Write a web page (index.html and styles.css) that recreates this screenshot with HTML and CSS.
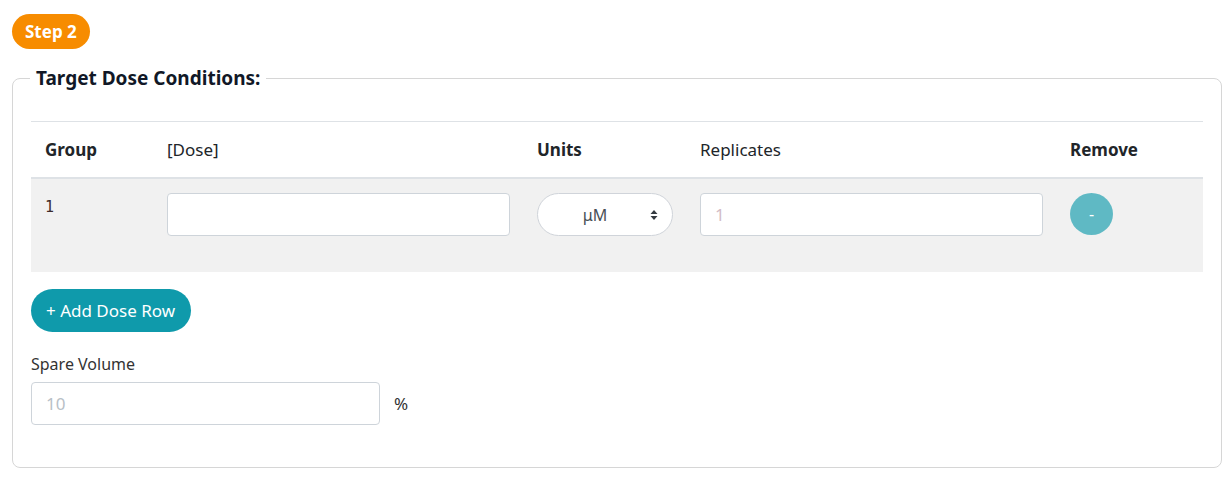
FILE: index.html
```html
<!DOCTYPE html>
<html lang="en">
<head>
  <meta charset="utf-8">
  <title>Dose conditions</title>
  <link rel="stylesheet" href="styles.css">
</head>
<body>
  <span class="step-badge">Step 2</span>

  <fieldset class="dose-box">
    <legend>Target Dose Conditions:</legend>

    <table class="dose-table">
      <colgroup>
        <col class="c-group">
        <col class="c-dose">
        <col class="c-units">
        <col class="c-reps">
        <col class="c-remove">
      </colgroup>
      <thead>
        <tr>
          <th>Group</th>
          <th class="plain">[Dose]</th>
          <th>Units</th>
          <th class="plain">Replicates</th>
          <th>Remove</th>
        </tr>
      </thead>
      <tbody>
        <tr>
          <td class="group-num">1</td>
          <td><input type="text" class="form-input"></td>
          <td>
            <div class="unit-select">
              <select>
                <option>μM</option>
                <option>nM</option>
                <option>mM</option>
              </select>
              <svg class="caret" width="8" height="12" viewBox="0 0 8 12">
                <path d="M4 1 L7.5 5 L0.5 5 Z M4 11 L7.5 7 L0.5 7 Z" fill="#343a40"/>
              </svg>
            </div>
          </td>
          <td><input type="text" class="form-input reps" placeholder="1"></td>
          <td><button class="remove-btn" disabled>-</button></td>
        </tr>
      </tbody>
    </table>

    <button class="add-btn">+ Add Dose Row</button>

    <label class="spare-label" for="spare">Spare Volume</label>
    <div class="spare-row">
      <input type="text" id="spare" class="form-input spare-input" placeholder="10">
      <span class="unit">%</span>
    </div>
  </fieldset>
</body>
</html>
```

FILE: styles.css
```css
body {
  font-family: "Noto Sans", "Liberation Sans", sans-serif;
  font-size: 17px;
  color: #212529;
  margin: 0;
  padding: 14px 9px 0 12px;
  background: #fff;
}

.step-badge {
  display: inline-block;
  background-color: #f78c00;
  color: #fff;
  font-weight: bold;
  font-size: 17px;
  line-height: 35px;
  padding: 0 13px;
  border-radius: 18px;
}

.dose-box {
  margin: 16px 0 0 0;
  border: 1px solid #d6d6d6;
  border-radius: 8px;
  padding: 16px 18px 42px 18px;
}

.dose-box legend {
  font-weight: bold;
  font-size: 19px;
  padding: 0 6px;
  margin-left: -1px;
  color: #111827;
}

.dose-table {
  width: 100%;
  border-collapse: collapse;
  table-layout: fixed;
  margin-top: 14px;
}

.c-group { width: 122px; }
.c-dose { width: 370px; }
.c-units { width: 163px; }
.c-reps { width: 370px; }

.dose-table th {
  text-align: left;
  padding: 16px 14px 15px;
  line-height: 24px;
  border-top: 1px solid #dee2e6;
  border-bottom: 2px solid #dee2e6;
  font-weight: bold;
}

.dose-table th.plain {
  font-weight: normal;
}

.dose-table td {
  background-color: #f1f1f1;
  padding: 14px 13px 36px 14px;
  vertical-align: top;
}

.group-num {
  font-family: "DejaVu Sans Mono", monospace;
  font-size: 15px;
  color: #3d2b2b;
  line-height: 28px;
}

.form-input {
  box-sizing: border-box;
  width: 100%;
  height: 43px;
  border: 1px solid #ced4da;
  border-radius: 4px;
  padding: 0 14px;
  font-family: inherit;
  font-size: 17px;
  background: #fff;
}

.form-input::placeholder {
  color: #b8c0c6;
}

.form-input.reps::placeholder {
  color: #d2bcc6;
}

.unit-select {
  position: relative;
  width: 136px;
}

.unit-select select {
  appearance: none;
  -webkit-appearance: none;
  box-sizing: border-box;
  width: 100%;
  height: 43px;
  border: 1px solid #d0d4da;
  border-radius: 22px;
  background: #fff;
  font-family: inherit;
  font-size: 16px;
  color: #495057;
  text-align: center;
  text-align-last: center;
  padding: 0 20px 0 0;
}

.unit-select .caret {
  position: absolute;
  right: 15px;
  top: 16px;
  pointer-events: none;
}

.remove-btn {
  width: 43px;
  height: 42px;
  border: none;
  border-radius: 50%;
  background-color: #5fb9c4;
  color: #fff;
  font-size: 16px;
  font-family: inherit;
}

.add-btn {
  display: block;
  margin-top: 17px;
  height: 43px;
  padding: 0 16px 0 15px;
  border: none;
  border-radius: 22px;
  background-color: #0f9aab;
  color: #fff;
  font-family: inherit;
  font-size: 17px;
}

.spare-label {
  display: block;
  margin-top: 20px;
  line-height: 24px;
  font-size: 16px;
  color: #333;
}

.spare-row {
  display: flex;
  align-items: center;
  margin-top: 6px;
}

.spare-input {
  width: 349px;
}

.unit {
  margin-left: 14px;
  color: #333;
}
```
